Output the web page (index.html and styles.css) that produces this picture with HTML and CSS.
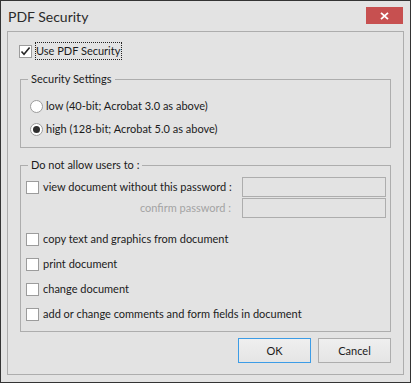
FILE: index.html
```html
<!DOCTYPE html>
<html>
<head>
<meta charset="utf-8">
<title>PDF Security</title>
<link rel="stylesheet" href="styles.css">
</head>
<body>
<div class="window">
  <div class="titlebar">
    <span class="title">PDF Security</span>
    <button class="close" aria-label="Close">
      <svg width="9" height="8" viewBox="0 0 9 8"><path d="M1 0.8 L8 7.2 M8 0.8 L1 7.2" stroke="#fff" stroke-width="1.8" fill="none"/></svg>
    </button>
  </div>
  <div class="panel">
    <label class="row top-row">
      <span class="cb"><svg width="11" height="11" viewBox="0 0 11 11"><path d="M1.5 5.5 L4 8.2 L9.6 1.6" stroke="#262626" stroke-width="1.6" fill="none"/></svg></span>
      <span class="focus">Use PDF Security</span>
    </label>

    <fieldset class="group g1">
      <legend>Security Settings</legend>
      <label class="row radio-row"><span class="radio"></span><span>low (40-bit; Acrobat 3.0 as above)</span></label>
      <label class="row radio-row"><span class="radio on"></span><span>high (128-bit; Acrobat 5.0 as above)</span></label>
    </fieldset>

    <fieldset class="group g2">
      <legend>Do not allow users to :</legend>
      <div class="pw-grid">
        <label class="row"><span class="cb"></span><span>view document without this password :</span></label>
        <span class="input"></span>
        <span class="confirm">confirm password :</span>
        <span class="input"></span>
      </div>
      <div class="checks">
        <label class="row"><span class="cb"></span><span>copy text and graphics from document</span></label>
        <label class="row"><span class="cb"></span><span>print document</span></label>
        <label class="row"><span class="cb"></span><span>change document</span></label>
        <label class="row"><span class="cb"></span><span>add or change comments and form fields in document</span></label>
      </div>
    </fieldset>

    <div class="buttons">
      <button class="btn default">OK</button>
      <button class="btn">Cancel</button>
    </div>
  </div>
</div>
</body>
</html>
```
FILE: styles.css
```css
* { box-sizing: border-box; }
html, body { margin: 0; padding: 0; background: #e3e3e3; }
body {
  font-family: Lato, "Liberation Sans", sans-serif;
  font-size: 11px;
  color: #1b1b1b;
}
.window {
  width: 411px;
  height: 383px;
  border: 1px solid #343434;
  background: #e3e3e3;
  display: flex;
  flex-direction: column;
}
.titlebar {
  height: 30px;
  display: flex;
  align-items: flex-start;
  padding: 0 7px 0 7px;
}
.title {
  font-size: 14px;
  line-height: 20px;
  margin-top: 6px;
  color: #2a2a2a;
}
.close {
  margin-left: auto;
  margin-top: 6px;
  width: 37px;
  height: 17px;
  border: 0;
  padding: 0;
  background: #c75050;
  display: flex;
  align-items: center;
  justify-content: center;
}
.close svg { display: block; }
.panel {
  margin: 0 6px;
  height: 344px;
  border: 1px solid #adadad;
  padding: 10px 12px 0 12px;
  display: flex;
  flex-direction: column;
}
.row {
  display: flex;
  align-items: center;
  height: 18px;
  line-height: 16px;
  white-space: nowrap;
}
.cb {
  width: 13px;
  height: 13px;
  flex: none;
  border: 1px solid #9c9c9c;
  background: #fff;
  margin-right: 4px;
  display: flex;
  align-items: center;
  justify-content: center;
}
.cb svg { display: block; }
.top-row { margin-left: -1px; }
.top-row .cb { margin-right: 3px; }
.focus {
  border: 1px dotted #222;
  height: 18px;
  padding: 0 1px 0 0;
  line-height: 16px;
}
.radio {
  width: 13px;
  height: 13px;
  flex: none;
  border-radius: 50%;
  border: 1px solid #9c9c9c;
  background: #fff;
  margin-right: 3px;
  display: flex;
  align-items: center;
  justify-content: center;
}
.radio.on::after {
  content: "";
  width: 7px;
  height: 7px;
  border-radius: 50%;
  background: #2f2f2f;
}
.group {
  margin: 0;
  min-width: 0;
  border: 1px solid #adadad;
}
.group legend {
  padding: 0 3px;
  line-height: 16px;
  height: 16px;
}
.g1 {
  margin-top: 11px;
  padding: 10px 0 9px 9px;
  display: flex;
  flex-direction: column;
  gap: 5px;
}
.g1 legend { margin-left: -2px; }
.g2 {
  margin-top: 9px;
  padding: 4px 4px 8px 5px;
}
.g2 legend { margin-left: 2px; }
.pw-grid {
  display: grid;
  grid-template-columns: 1fr 144px;
  grid-auto-rows: 20px;
  column-gap: 10px;
  row-gap: 1px;
}
.pw-grid .row { height: 20px; }
.input {
  display: block;
  height: 20px;
  border: 1px solid #adadad;
  background: #e3e3e3;
}
.confirm {
  color: #a3a3a3;
  text-align: right;
  line-height: 20px;
  padding-right: 1px;
}
.checks {
  margin-top: 12px;
  display: flex;
  flex-direction: column;
  gap: 7px;
}
.buttons {
  margin-top: 6px;
  display: flex;
  justify-content: flex-end;
  gap: 7px;
}
.btn {
  width: 73px;
  height: 25px;
  border: 1px solid #adadad;
  background: linear-gradient(#efefef, #e5e5e5);
  font-family: Lato, "Liberation Sans", sans-serif;
  font-size: 11px;
  color: #1b1b1b;
  padding: 0;
}
.btn.default { border-color: #3c9ce6; }
```
